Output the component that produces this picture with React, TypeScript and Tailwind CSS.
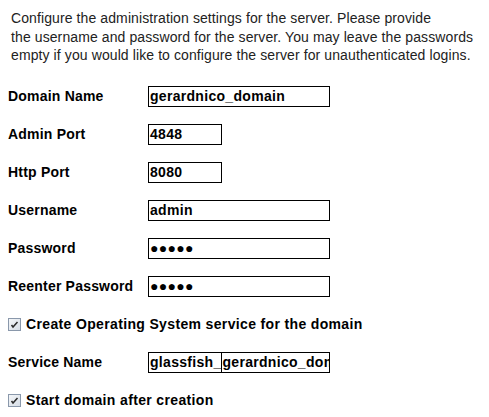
import React from "react";

const Field = ({ label, value, w, cursor }: { label: string; value: string; w: string; cursor?: boolean }) => (
  <div className="flex items-center h-[20px]">
    <div className="w-[140px] shrink-0 font-bold text-[14px] tracking-[0.2px]">{label}</div>
    <div className={`h-[21px] border border-black bg-white ${w} overflow-hidden whitespace-nowrap flex items-center font-bold text-[14px] tracking-[0.3px] pl-px`}>
      {cursor ? (
        <>
          <span>glassfish_</span>
          <span className="inline-block w-px h-[19px] bg-black shrink-0" />
          <span>gerardnico_domain</span>
        </>
      ) : (
        value
      )}
    </div>
  </div>
);

const Check = ({ label }: { label: string }) => (
  <div className="flex items-center h-[20px]">
    <div className="w-[13px] h-[13px] border border-[#8a98ab] bg-gradient-to-br from-[#f4f6f8] to-[#d6dde6] flex items-center justify-center mr-[5px]">
      <svg width="9" height="9" viewBox="0 0 9 9">
        <path d="M1.5 5 L3 7 L7.5 2" stroke="#2a2a2a" strokeWidth="1.5" fill="none" />
      </svg>
    </div>
    <div className="font-bold text-[14px] tracking-[0.35px]">{label}</div>
  </div>
);

export default function App() {
  return (
    <div className="w-[489px] h-[417px] bg-white text-black overflow-hidden" style={{ fontFamily: '"Liberation Sans", Arial, sans-serif' }}>
      <div className="pl-[11px] pt-[9px] text-[14px] leading-[18.5px] text-[#222] tracking-[0.1px]">
        <div>Configure the administration settings for the server. Please provide</div>
        <div>the username and password for the server. You may leave the passwords</div>
        <div>empty if you would like to configure the server for unauthenticated logins.</div>
      </div>
      <div className="pl-[8px] pt-[22px] flex flex-col gap-[18px]">
        <Field label="Domain Name" value="gerardnico_domain" w="w-[182px]" />
        <Field label="Admin Port" value="4848" w="w-[74px]" />
        <Field label="Http Port" value="8080" w="w-[74px]" />
        <Field label="Username" value="admin" w="w-[182px]" />
        <Field label="Password" value="●●●●●" w="w-[182px]" />
        <Field label="Reenter Password" value="●●●●●" w="w-[182px]" />
        <Check label="Create Operating System service for the domain" />
        <Field label="Service Name" value="" w="w-[182px]" cursor />
        <Check label="Start domain after creation" />
      </div>
    </div>
  );
}
